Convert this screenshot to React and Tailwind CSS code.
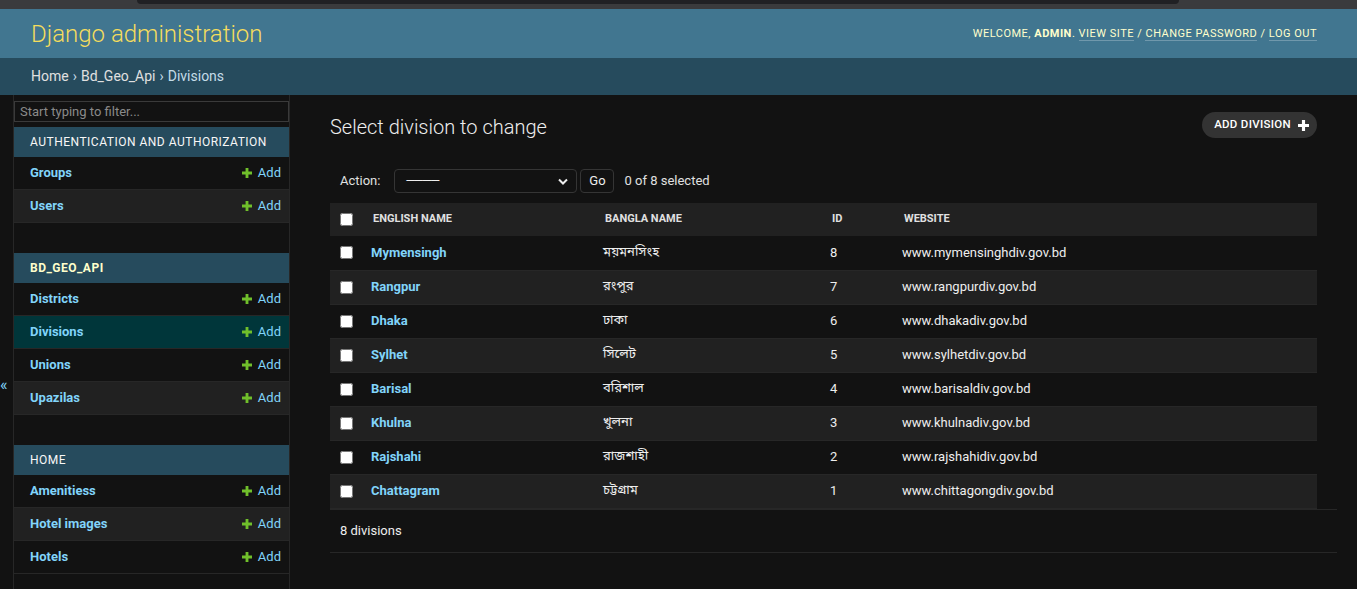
const sidebarApps = [
  {
    name: "Authentication and Authorization",
    current: false,
    models: [
      { name: "Groups", bg: "" },
      { name: "Users", bg: "bg-[#212121]" },
    ],
  },
  {
    name: "Bd_Geo_Api",
    current: true,
    models: [
      { name: "Districts", bg: "" },
      { name: "Divisions", bg: "bg-[#00363a]" },
      { name: "Unions", bg: "" },
      { name: "Upazilas", bg: "bg-[#212121]" },
    ],
  },
  {
    name: "Home",
    current: false,
    models: [
      { name: "Amenitiess", bg: "" },
      { name: "Hotel images", bg: "bg-[#212121]" },
      { name: "Hotels", bg: "" },
    ],
  },
];

const divisions = [
  { en: "Mymensingh", bn: "ময়মনসিংহ", id: 8, web: "www.mymensinghdiv.gov.bd" },
  { en: "Rangpur", bn: "রংপুর", id: 7, web: "www.rangpurdiv.gov.bd" },
  { en: "Dhaka", bn: "ঢাকা", id: 6, web: "www.dhakadiv.gov.bd" },
  { en: "Sylhet", bn: "সিলেট", id: 5, web: "www.sylhetdiv.gov.bd" },
  { en: "Barisal", bn: "বরিশাল", id: 4, web: "www.barisaldiv.gov.bd" },
  { en: "Khulna", bn: "খুলনা", id: 3, web: "www.khulnadiv.gov.bd" },
  { en: "Rajshahi", bn: "রাজশাহী", id: 2, web: "www.rajshahidiv.gov.bd" },
  { en: "Chattagram", bn: "চট্টগ্রাম", id: 1, web: "www.chittagongdiv.gov.bd" },
];

const PlusIcon = ({ color = "#70bf2b", size = 10 }) => (
  <svg width={size} height={size} viewBox="0 0 14 14">
    <path d="M5 0h4v5h5v4H9v5H5V9H0V5h5z" fill={color} />
  </svg>
);

const Checkbox = () => (
  <input type="checkbox" className="w-[13px] h-[13px] m-0 block" />
);

const Sidebar = () => (
  <nav className="w-[276px] shrink-0 border-r border-[#272727]">
    <input
      type="search"
      placeholder="Start typing to filter..."
      className="mt-[6px] block w-full h-[21px] bg-[#121212] border border-[#3a3a3a] px-[5px] text-[13px] text-[#eeeeee] placeholder:text-[#8a8a8a] outline-none"
    />
    <div className="mt-[5px]">
      {sidebarApps.map((app) => (
        <div key={app.name} className="mb-[30px]">
          <div
            className={
              "h-[30px] bg-[#264b5d] pl-[16px] flex items-center text-[12px] uppercase tracking-[0.5px] " +
              (app.current ? "font-bold text-[#ffffcc]" : "text-[#f7f7f7]")
            }
          >
            {app.name}
          </div>
          {app.models.map((m) => (
            <div
              key={m.name}
              className={"h-[33px] border-b border-[#272727] flex items-center justify-between pl-[16px] pr-[8px] " + m.bg}
            >
              <span className="text-[13px] font-bold text-[#81d4fa]">{m.name}</span>
              <span className="flex items-center gap-[6px] text-[13px] text-[#81d4fa]">
                <PlusIcon />
                Add
              </span>
            </div>
          ))}
        </div>
      ))}
    </div>
  </nav>
);

const ChangeList = () => (
  <main className="flex-1 px-[40px] pt-[20px]">
    <div className="flex justify-between h-[24px]">
      <h1 className="text-[20px] leading-[24px] font-light text-[#eeeeee]">Select division to change</h1>
      <div className="-mt-[3px] h-[26px] rounded-full bg-[#333333] pl-[12px] pr-[8px] flex items-center gap-[7px] text-[11.5px] font-medium uppercase tracking-[0.3px] text-white">
        Add division
        <PlusIcon color="#ffffff" size={11} />
      </div>
    </div>

    <div className="flex items-center p-[10px] mt-[20px] text-[13px]">
      <span className="text-[#e0e0e0]">Action:</span>
      <div className="ml-[14px] w-[183px] h-[24px] border border-[#353535] rounded-[4px] bg-[#121212] flex items-center justify-between pl-[10px] pr-[8px]">
        <span className="text-[13px] tracking-[-2px] text-[#eeeeee]">————</span>
        <svg width="10" height="7" viewBox="0 0 10 7">
          <path d="M1 1.5l4 4 4-4" stroke="#eeeeee" strokeWidth="2" fill="none" />
        </svg>
      </div>
      <div className="ml-[3px] w-[34px] h-[24px] border border-[#353535] rounded-[4px] bg-[#121212] flex items-center justify-center text-[#eeeeee]">
        Go
      </div>
      <span className="ml-[10px] text-[#e0e0e0]">0 of 8 selected</span>
    </div>

    <table className="w-full table-fixed text-[13px]">
      <colgroup>
        <col className="w-[33px]" />
        <col className="w-[232px]" />
        <col className="w-[227px]" />
        <col className="w-[72px]" />
        <col />
      </colgroup>
      <thead>
        <tr className="h-[33px] bg-[#212121] text-[11px] font-bold uppercase text-left text-[#e0e0e0]">
          <th className="pl-[10px]"><Checkbox /></th>
          <th className="pl-[10px] font-bold">English name</th>
          <th className="pl-[10px] font-bold">Bangla name</th>
          <th className="pl-[10px] font-bold">Id</th>
          <th className="pl-[10px] font-bold">Website</th>
        </tr>
      </thead>
      <tbody>
        {divisions.map((d, i) => (
          <tr key={d.id} className={"h-[34px] " + (i % 2 === 1 ? "bg-[#212121]" : "bg-[#121212]")}>
            <td className="pl-[10px] border-b border-[#272727]"><Checkbox /></td>
            <td className="pl-[8px] border-b border-[#272727] font-bold text-[#81d4fa]">{d.en}</td>
            <td className="pl-[8px] border-b border-[#272727] text-[#eeeeee] font-['Noto_Sans_Bengali','Noto_Serif_Bengali','Lohit_Bengali','FreeSerif',sans-serif]">{d.bn}</td>
            <td className="pl-[8px] border-b border-[#272727] text-[#eeeeee]">{d.id}</td>
            <td className="pl-[8px] border-b border-[#272727] text-[#eeeeee]">{d.web}</td>
          </tr>
        ))}
      </tbody>
    </table>

    <div className="mr-[-20px] h-[44px] border-t border-b border-[#272727] flex items-center pl-[10px] text-[13px] text-[#eeeeee]">
      8 divisions
    </div>
  </main>
);

export default function App() {
  return (
    <div className="min-h-screen bg-[#121212] text-[#eeeeee] font-['Roboto','Noto_Sans',sans-serif]">
      <div className="h-[9px] bg-[#3a3b3d] flex">
        <div className="ml-[137px] w-[1042px] h-[4px] bg-[#202124] rounded-b-[6px]" />
      </div>

      <header className="h-[49px] bg-[#417690] flex items-center justify-between pl-[31px] pr-[40px]">
        <div className="text-[24px] font-light text-[#f5dd5d]">Django administration</div>
        <div className="text-[11px] uppercase tracking-[0.5px] text-[#ffffcc] pt-[1px]">
          Welcome, <strong className="font-bold">admin</strong>.{" "}
          <span className="border-b border-white/25">View site</span> /{" "}
          <span className="border-b border-white/25">Change password</span> /{" "}
          <span className="border-b border-white/25">Log out</span>
        </div>
      </header>

      <div className="h-[37px] bg-[#264b5d] pl-[31px] flex items-center text-[14px] text-[#c4dce8]">
        <span className="text-[#e0e0e0]">Home</span>
        <span className="mx-[4px]">›</span>
        <span className="text-[#e0e0e0]">Bd_Geo_Api</span>
        <span className="mx-[4px]">›</span>
        <span>Divisions</span>
      </div>

      <div className="flex">
        <div className="w-[14px] shrink-0 border-r border-[#272727] pt-[282px] text-[16px] leading-none text-[#81d4fa]">
          <span className="block">«</span>
        </div>
        <Sidebar />
        <ChangeList />
      </div>
    </div>
  );
}
